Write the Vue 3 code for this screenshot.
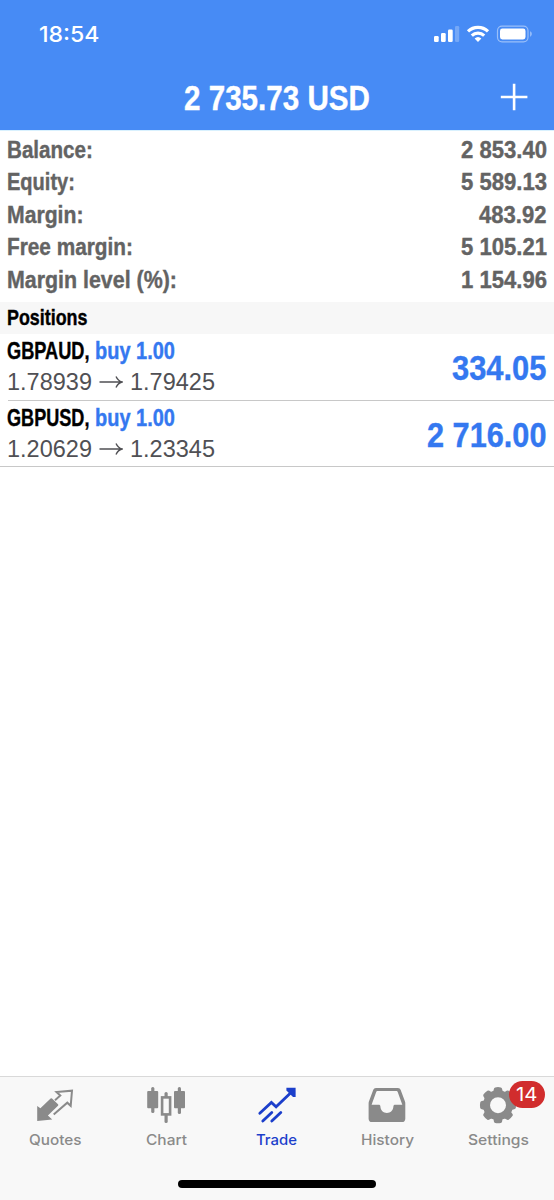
<script setup>
import { h } from 'vue'

// Scales a line of text horizontally so that it takes exactly its given width
const fit = (vnode) => {
  const text = vnode.el
  const natural = text.getComputedTextLength()
  if (natural) text.setAttribute('transform', `scale(${vnode.props['data-w'] / natural} 1)`)
}
const FitText = (props) =>
  h('svg', { class: 'fit', width: props.w, height: props.h }, [
    h('text', { x: 0, y: props.base, 'data-w': props.w, onVnodeMounted: fit }, props.text),
  ])
FitText.props = ['text', 'w', 'h', 'base']

const summary = [
  { label: 'Balance:', lw: 86, value: '2 853.40', vw: 86 },
  { label: 'Equity:', lw: 68, value: '5 589.13', vw: 86 },
  { label: 'Margin:', lw: 76.5, value: '483.92', vw: 67.5 },
  { label: 'Free margin:', lw: 126, value: '5 105.21', vw: 86 },
  { label: 'Margin level (%):', lw: 170, value: '1 154.96', vw: 86 },
]
const positions = [
  { symbol: 'GBPAUD,', open: '1.78939', now: '1.79425', profit: '334.05', pw: 94.5 },
  { symbol: 'GBPUSD,', open: '1.20629', now: '1.23345', profit: '2 716.00', pw: 119.5 },
]
const tabs = [
  { id: 'quotes', label: 'Quotes', w: 52.5 },
  { id: 'chart', label: 'Chart', w: 41 },
  { id: 'trade', label: 'Trade', w: 41 },
  { id: 'history', label: 'History', w: 53 },
  { id: 'settings', label: 'Settings', w: 61 },
]
const teeth = [0, 45, 90, 135, 180, 225, 270, 315]
</script>

<template>
  <div class="screen">
    <header class="header">
      <div class="status">
        <FitText class="time" text="18:54" :w="60.5" :h="24" :base="18" />
        <svg class="indicators" width="100" height="20" viewBox="0 0 100 20" fill="#fff">
          <rect x="1" y="12" width="4.7" height="6" rx="1.2" />
          <rect x="8" y="9" width="4.7" height="9" rx="1.2" />
          <rect x="15" y="5.5" width="4.7" height="12.5" rx="1.2" />
          <rect x="22" y="2" width="4.2" height="16" rx="1.2" opacity=".25" />
          <g fill="none" stroke="#fff" stroke-width="3.2">
            <path d="M35 7.3a14.5 14.5 0 0 1 20 0" />
            <path d="M38.8 11.6a9 9 0 0 1 12.4 0" />
          </g>
          <path d="M45 18l-3.4-3.5a5 5 0 0 1 6.8 0z" />
          <rect x="64.5" y="2.2" width="30.5" height="15.6" rx="4.5" fill="none" stroke="#fff" stroke-opacity=".45" stroke-width="1.2" />
          <rect x="67" y="4.5" width="25.5" height="11" rx="2.4" />
          <path d="M97.2 7.3c2 .8 2 4.6 0 5.4z" opacity=".5" />
        </svg>
      </div>
      <div class="titlebar">
        <FitText class="cond title" text="2 735.73 USD" :w="186" :h="40" :base="31" />
        <svg class="plus" width="28" height="28" viewBox="0 0 28 28"><path d="M.8 14h26.6M14.1.7v26.6" stroke="#fff" stroke-width="2.6" /></svg>
      </div>
    </header>

    <section class="summary">
      <div v-for="row in summary" :key="row.label" class="summary-row">
        <FitText class="cond" :text="row.label" :w="row.lw" :h="32" :base="24" />
        <FitText class="cond" :text="row.value" :w="row.vw" :h="32" :base="24" />
      </div>
    </section>

    <div class="section-head">
      <FitText class="cond" text="Positions" :w="80.5" :h="32" :base="23.5" />
    </div>

    <section class="positions">
      <div v-for="p in positions" :key="p.symbol" class="position">
        <div class="details">
          <div class="deal">
            <FitText class="cond symbol" :text="p.symbol" :w="82.5" :h="30" :base="25" />
            <FitText class="cond side" text="buy 1.00" :w="80" :h="30" :base="25" />
          </div>
          <div class="prices">
            <FitText class="price" :text="p.open" :w="85" :h="30" :base="26.2" />
            <svg class="arrow" width="24" height="14" viewBox="0 0 24 14"><path d="M.5 7H23M17 1.5Q19 5.8 23 7Q19 8.2 17 12.5" /></svg>
            <FitText class="price" :text="p.now" :w="85" :h="30" :base="26.2" />
          </div>
        </div>
        <FitText class="cond profit" :text="p.profit" :w="p.pw" :h="42" :base="32" />
      </div>
    </section>

    <nav class="tabs">
      <div v-for="t in tabs" :key="t.id" class="tab" :class="{ active: t.id === 'trade' }">
        <div class="icon">
          <svg v-if="t.id === 'quotes'" width="40" height="40" viewBox="0 0 40 40">
            <path d="M2.2 34.9V20l3.2 2.3L15.6 12.5q.7-.6 1.4 0l6 5.8q.7.7 0 1.4L12.9 29.6l4.3 3.9z" fill="currentColor" />
            <path d="M20 14.2l5.3-4.6-3.8-3.5L37 4.7 35.7 19.8l-3.4-3.1L18.7 28.5" fill="none" stroke="currentColor" stroke-width="2" />
          </svg>
          <svg v-else-if="t.id === 'chart'" width="40" height="40" viewBox="0 0 40 40" fill="currentColor">
            <rect x="1.2" y="5" width="11" height="17.2" rx="1" /><rect x="5.2" y="1" width="3.2" height="26" rx="1.5" />
            <rect x="28" y="5" width="11" height="17.2" rx="1" /><rect x="31.8" y="1" width="3.2" height="27" rx="1.5" />
            <rect x="18.5" y="6" width="3.2" height="6" rx="1.5" /><rect x="18.5" y="28" width="3.2" height="9" rx="1.5" />
            <rect x="16.1" y="11.4" width="8" height="17" fill="none" stroke="currentColor" stroke-width="2.6" />
          </svg>
          <svg v-else-if="t.id === 'trade'" width="40" height="40" viewBox="0 0 40 40">
            <path d="M2.8 27.2L14.4 16.5l4.7 4.3L35.6 5M5.8 35l9-8.6M14.8 35l9-8.6" fill="none" stroke="currentColor" stroke-width="2.8" stroke-linecap="round" />
            <path d="M29.4 1.8h9.2v9.2h-2.6L29.4 4.4z" fill="currentColor" />
          </svg>
          <svg v-else-if="t.id === 'history'" width="40" height="40" viewBox="0 0 40 40">
            <path fill="currentColor" fill-rule="evenodd" d="M9 2h21.9c1.4 0 2.3.7 2.8 2l4.2 11.2q.4 1 .4 2.2v15.3c0 2-1.3 3.4-3.3 3.4H4.9c-2 0-3.3-1.4-3.3-3.4V17.4q0-1.2.4-2.2L6.2 4c.5-1.3 1.4-2 2.8-2zM10.8 5c-.9 0-1.3.3-1.6 1.1L4.6 18.8h6.9c1.3 0 1.9.6 1.9 1.7.3 3.9 2.9 6.4 6.5 6.4s6.2-2.5 6.5-6.4c0-1.1.6-1.7 1.9-1.7h7L30.7 6.1c-.3-.8-.7-1.1-1.6-1.1z" />
          </svg>
          <svg v-else width="40" height="40" viewBox="0 0 40 40">
            <g fill="currentColor"><path v-for="a in teeth" :key="a" d="M13.5 8q2.1-1.6 2.4-5 .2-1.3 1.3-1.6 2.8-.6 5.6 0 1.1.3 1.3 1.6.3 3.4 2.4 5z" :transform="`rotate(${a} 20 19.2)`" /></g>
            <circle cx="20" cy="19.2" r="11.5" fill="none" stroke="currentColor" stroke-width="7" />
          </svg>
          <div v-if="t.id === 'settings'" class="badge"><FitText text="14" :w="21.5" :h="26" :base="20" /></div>
        </div>
        <FitText class="tab-label" :text="t.label" :w="t.w" :h="20" :base="16" />
      </div>
      <div class="home"></div>
    </nav>
  </div>
</template>

<style>
html, body { margin: 0; background: #fff; }
</style>

<style scoped>
.screen { width: 554px; height: 1200px; display: flex; flex-direction: column; background: #fff; overflow: hidden; }
.fit { display: block; flex: none; overflow: visible; fill: currentColor; font-family: "Liberation Sans", Arial, sans-serif; }
.cond { font-family: "Liberation Sans Narrow", "Liberation Sans", Arial, sans-serif; font-weight: 700; stroke: currentColor; stroke-width: .4px; }
.header { height: 130px; flex: none; background: #478bf5; color: #fff; }
.status { height: 66px; display: flex; justify-content: space-between; align-items: flex-start; padding: 24px 21px 0 38.5px; box-sizing: border-box; }
.time { font-family: Inter, sans-serif; font-weight: 500; font-size: 22px; }
.titlebar { height: 64px; display: grid; grid-template-columns: 1fr auto 1fr; align-items: start; padding: 13px 26.5px 0 26px; }
.title { grid-column: 2; font-size: 35px; }
.plus { justify-self: end; margin-top: 4px; }
.summary { height: 171.5px; flex: none; box-sizing: border-box; padding: 2.7px 7.5px 0 7px; border-top: 1px solid #d9f1fe; color: #636363; font-size: 24.5px; }
.summary-row { height: 32.5px; display: flex; justify-content: space-between; }
.section-head { height: 32.5px; flex: none; background: #f7f7f7; padding-left: 7px; font-size: 21.5px; color: #000; }
.positions { flex: 1; }
.position { height: 66.5px; box-sizing: border-box; display: flex; justify-content: space-between; margin-left: 8px; padding: 0 7.5px 0 0; border-bottom: 1px solid #c8c8c8; }
.position:last-child { margin-left: 0; padding-left: 8px; }
.details { margin-left: -1px; }
.deal { display: flex; gap: 5px; height: 30px; font-size: 24px; }
.symbol { color: #000; }
.side, .profit { color: #3478f0; }
.prices { display: flex; height: 30px; align-items: flex-start; color: #505054; font-size: 24px; }
.arrow { margin: 11px 7px 0 7px; fill: none; stroke: currentColor; stroke-width: 1.4px; }
.profit { font-size: 35px; margin-top: 14px; }
.tabs { height: 124px; flex: none; box-sizing: border-box; position: relative; display: grid; grid-template-columns: repeat(5, 110.7px); border-top: 1px solid #d9d9d9; background: #f8f8f8; color: #8a8a8a; }
.tab { display: flex; flex-direction: column; align-items: center; padding-top: 9px; }
.icon { position: relative; width: 40px; height: 40px; }
.icon svg { display: block; }
.tab-label { margin-top: 3px; font-family: Inter, sans-serif; font-weight: 500; font-size: 14.5px; }
.active { color: #1c3fcb; }
.badge { position: absolute; left: 31px; top: -5px; width: 36px; height: 27px; border-radius: 14px; background: #d12d2d; color: #fff; display: flex; justify-content: center; }
.badge .fit { font-family: Inter, sans-serif; font-size: 19px; }
.home { position: absolute; left: 178px; top: 103px; width: 198px; height: 8px; border-radius: 4px; background: #000; }
</style>
